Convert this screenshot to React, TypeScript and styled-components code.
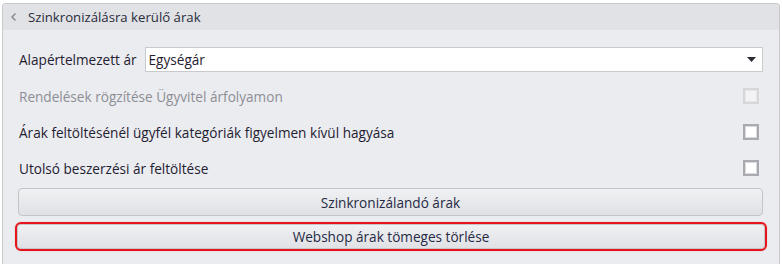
import React from "react";
import styled, { createGlobalStyle } from "styled-components";

const Global = createGlobalStyle`
  html, body { margin: 0; padding: 0; background: #ffffff; }
  body { font-family: "Open Sans", "Noto Sans", sans-serif; font-size: 13.6px; color: #1f2131; }
`;

const Page = styled.div`
  padding: 3px 2px 0 2px;
  width: 778px;
  height: 261px;
`;

const Panel = styled.section`
  box-sizing: border-box;
  height: 100%;
  border: 1px solid #c8c9cd;
  border-bottom: none;
  border-radius: 4px 4px 0 0;
  background: #ebecf0;
  display: flex;
  flex-direction: column;
`;

const Header = styled.div`
  height: 26px;
  display: flex;
  align-items: center;
  padding-left: 7px;
  gap: 10px;
  background: #e1e2e6;
  border-radius: 3px 3px 0 0;
  color: #2a2c3a;
  font-size: 13.2px;
`;

const Chevron = styled.svg`
  width: 8px;
  height: 10px;
  flex: none;
`;

const Body = styled.div`
  padding: 17px 16px 0 16px;
  display: flex;
  flex-direction: column;
`;

const FieldRow = styled.div`
  display: flex;
  align-items: center;
  height: 25px;
  gap: 8px;
`;

const Label = styled.span<{ $disabled?: boolean }>`
  font-size: 13.6px;
  color: ${(p) => (p.$disabled ? "#8d8e94" : "#1f2131")};
  white-space: nowrap;
`;

const Select = styled.div`
  flex: 1;
  box-sizing: border-box;
  height: 25px;
  background: #ffffff;
  border: 1px solid #c9cacd;
  display: flex;
  align-items: center;
  padding: 0 6px 0 3px;
  justify-content: space-between;
`;

const Caret = styled.svg`
  width: 9px;
  height: 5px;
`;

const Rows = styled.div`
  margin-top: 6px;
  display: grid;
  grid-auto-rows: 36px;
`;

const CheckRow = styled.div`
  display: flex;
  align-items: center;
  justify-content: space-between;
  padding-right: 4px;
`;

const Box = styled.span<{ $disabled?: boolean }>`
  box-sizing: border-box;
  width: 16px;
  height: 16px;
  border: 2px solid ${(p) => (p.$disabled ? "#d6d7da" : "#a9aab0")};
  background: ${(p) => (p.$disabled ? "#f3f3f5" : "#ffffff")};
  box-shadow: inset 0 0 0 1px ${(p) => (p.$disabled ? "#e6e6e9" : "#d9dadd")};
`;

const Buttons = styled.div`
  margin: 2px 0 0 -1px;
  display: flex;
  flex-direction: column;
  gap: 6px;
`;

const Button = styled.button<{ $highlight?: boolean }>`
  box-sizing: border-box;
  height: ${(p) => (p.$highlight ? "29px" : "28px")};
  margin: ${(p) => (p.$highlight ? "0 -4px 0 -3px" : "0")};
  border: ${(p) => (p.$highlight ? "2px solid #e8141c" : "1px solid #c3c4c8")};
  border-radius: ${(p) => (p.$highlight ? "6px" : "4px")};
  box-shadow: ${(p) =>
    p.$highlight ? "inset 0 0 0 1px #c6c7cb, 0 0 1px rgba(238,28,35,0.5)" : "none"};
  background: linear-gradient(#f0f1f3, #e0e1e5);
  font-family: "Open Sans", "Noto Sans", sans-serif;
  font-size: 13.6px;
  color: #262a44;
  padding: 0;
  cursor: pointer;
`;

export default function App() {
  return (
    <>
      <Global />
      <Page>
        <Panel>
          <Header>
            <Chevron viewBox="0 0 8 10">
              <path d="M5.5 1.5 L2 5 L5.5 8.5" fill="none" stroke="#85868c" strokeWidth="1.4" />
            </Chevron>
            Szinkronizálásra kerülő árak
          </Header>
          <Body>
            <FieldRow>
              <Label>Alapértelmezett ár</Label>
              <Select>
                <Label>Egységár</Label>
                <Caret viewBox="0 0 9 5">
                  <path d="M0 0 H9 L4.5 5 Z" fill="#2a2b33" />
                </Caret>
              </Select>
            </FieldRow>
            <Rows>
              <CheckRow>
                <Label $disabled>Rendelések rögzítése Ügyvitel árfolyamon</Label>
                <Box $disabled />
              </CheckRow>
              <CheckRow>
                <Label>Árak feltöltésénél ügyfél kategóriák figyelmen kívül hagyása</Label>
                <Box />
              </CheckRow>
              <CheckRow>
                <Label>Utolsó beszerzési ár feltöltése</Label>
                <Box />
              </CheckRow>
            </Rows>
            <Buttons>
              <Button>Szinkronizálandó árak</Button>
              <Button $highlight>Webshop árak tömeges törlése</Button>
            </Buttons>
          </Body>
        </Panel>
      </Page>
    </>
  );
}
